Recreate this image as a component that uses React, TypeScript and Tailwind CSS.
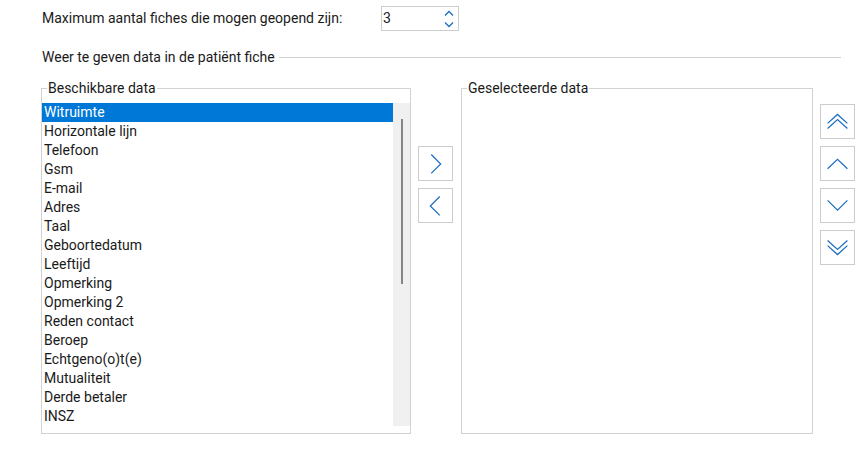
import React from "react";

const available = [
  "Witruimte",
  "Horizontale lijn",
  "Telefoon",
  "Gsm",
  "E-mail",
  "Adres",
  "Taal",
  "Geboortedatum",
  "Leeftijd",
  "Opmerking",
  "Opmerking 2",
  "Reden contact",
  "Beroep",
  "Echtgeno(o)t(e)",
  "Mutualiteit",
  "Derde betaler",
  "INSZ",
];

type ChevronKind = "right" | "left" | "up" | "down" | "top" | "bottom";

// polyline points per arrow button, in a 35x35 box
const chevrons: Record<ChevronKind, string[]> = {
  right: ["13,8 23,18 13,28"],
  left: ["22,8 12,18 22,28"],
  up: ["7,23 17.5,13 28,23"],
  down: ["7,12 17.5,22.5 28,12"],
  top: ["7,19.5 17.5,10 28,19.5", "7,25 17.5,15.5 28,25"],
  bottom: ["7,10 17.5,19.5 28,10", "7,15.5 17.5,25 28,15.5"],
};

function ArrowButton({ kind }: { kind: ChevronKind }) {
  return (
    <button className="flex h-[35px] w-[35px] items-center justify-center border border-[#cccccc] bg-white">
      <svg width="35" height="35" viewBox="0 0 35 35" fill="none">
        {chevrons[kind].map((p) => (
          <polyline
            key={p}
            points={p}
            stroke="#1b6ec2"
            strokeWidth="1.3"
            strokeLinejoin="miter"
          />
        ))}
      </svg>
    </button>
  );
}

function GroupBox({
  title,
  className,
  children,
}: {
  title: string;
  className: string;
  children?: React.ReactNode;
}) {
  return (
    <div className={`relative border border-[#d2d2d2] bg-white ${className}`}>
      <span className="absolute -top-[9px] left-[5px] bg-white px-[1px] leading-[16px]">
        {title}
      </span>
      {children}
    </div>
  );
}

function SpinBox({ value }: { value: number }) {
  return (
    <div className="flex h-[25px] w-[78px] items-center justify-between border border-[#cccccc] bg-white pl-[1px] pr-[4px]">
      <span>{value}</span>
      <svg width="10" height="18" viewBox="0 0 10 18" fill="none">
        <polyline points="1,5.5 5,1.5 9,5.5" stroke="#1b6ec2" strokeWidth="1.3" />
        <polyline points="1,12.5 5,16.5 9,12.5" stroke="#1b6ec2" strokeWidth="1.3" />
      </svg>
    </div>
  );
}

export default function App() {
  const selected = 0;

  return (
    <div
      className="h-[451px] w-[859px] overflow-hidden bg-white pt-[6px] text-[14px] text-[#1a1a1a]"
      style={{ fontFamily: "Roboto, 'Liberation Sans', sans-serif" }}
    >
      <div className="flex items-center pl-[42px]">
        <span className="w-[339px]">Maximum aantal fiches die mogen geopend zijn:</span>
        <SpinBox value={3} />
      </div>

      <div className="mt-[18px] flex w-[841px] items-center gap-[4px] pl-[42px]">
        <span className="leading-[16px]">Weer te geven data in de patiënt fiche</span>
        <div className="h-px flex-1 bg-[#d2d2d2]" />
      </div>

      <div className="mt-[23px] flex items-start pl-[41px]">
        <GroupBox title="Beschikbare data" className="h-[346px] w-[370px] pt-[14px]">
          <div className="flex h-[323px]">
            <ul className="flex-1">
              {available.map((item, i) => (
                <li
                  key={item}
                  className={`h-[19px] pl-[2px] leading-[19px] ${
                    i === selected ? "bg-[#0078d7] text-white" : ""
                  }`}
                >
                  {item}
                </li>
              ))}
            </ul>
            <div className="flex w-[17px] justify-center bg-[#f0f0f0] pt-[16px]">
              <div className="h-[165px] w-[2px] bg-[#858585]" />
            </div>
          </div>
        </GroupBox>

        <div className="ml-[7px] mt-[58px] flex flex-col gap-[7px]">
          <ArrowButton kind="right" />
          <ArrowButton kind="left" />
        </div>

        <GroupBox title="Geselecteerde data" className="ml-[8px] h-[346px] w-[352px]" />

        <div className="ml-[7px] mt-[16px] flex flex-col gap-[7px]">
          <ArrowButton kind="top" />
          <ArrowButton kind="up" />
          <ArrowButton kind="down" />
          <ArrowButton kind="bottom" />
        </div>
      </div>
    </div>
  );
}
